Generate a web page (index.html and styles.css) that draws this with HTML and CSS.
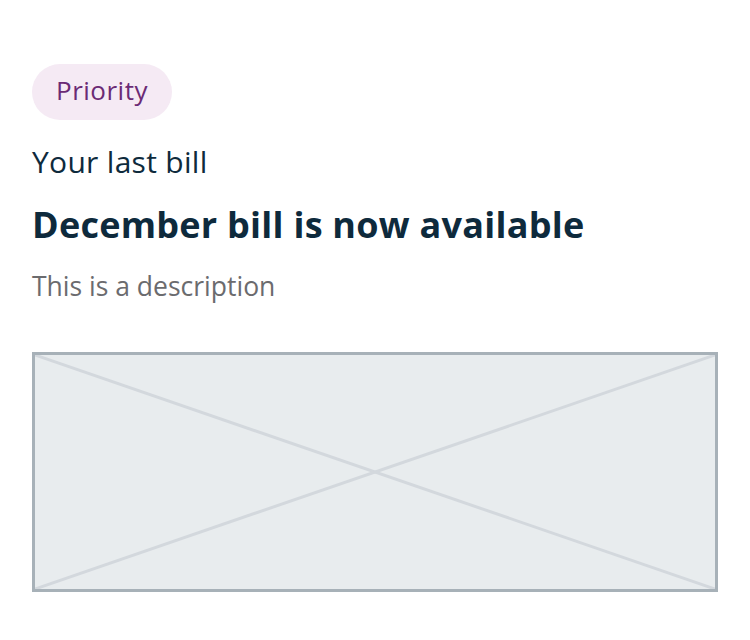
FILE: index.html
```html
<!DOCTYPE html>
<html>
<head>
<meta charset="utf-8">
<link rel="stylesheet" href="styles.css">
</head>
<body>
<div class="card">
  <span class="pill">Priority</span>
  <p class="eyebrow">Your last bill</p>
  <h1 class="title">December bill is now available</h1>
  <p class="desc">This is a description</p>
  <div class="placeholder">
    <svg class="cross" viewBox="0 0 100 100" preserveAspectRatio="none">
      <line x1="0" y1="0" x2="100" y2="100" vector-effect="non-scaling-stroke"/>
      <line x1="100" y1="0" x2="0" y2="100" vector-effect="non-scaling-stroke"/>
    </svg>
  </div>
</div>
</body>
</html>
```

FILE: styles.css
```css
html, body {
  margin: 0;
  padding: 0;
  background: #ffffff;
}
body {
  font-family: "Open Sans", "Noto Sans", sans-serif;
  color: #0e2a3c;
}
.card {
  padding: 64px 32px 0 32px;
  display: flex;
  flex-direction: column;
  align-items: flex-start;
}
.pill {
  display: inline-flex;
  align-items: center;
  height: 56px;
  padding: 0 24px 4px 24px;
  border-radius: 28px;
  background: #f5eaf4;
  color: #6b2a75;
  font-size: 26px;
  font-weight: 500;
  letter-spacing: 0.5px;
  box-sizing: border-box;
}
.eyebrow {
  margin: 22px 0 0 0;
  font-size: 30px;
  letter-spacing: 0.3px;
  line-height: 40px;
}
.title {
  margin: 19px 0 0 0;
  font-size: 36px;
  font-weight: 700;
  letter-spacing: 0.25px;
  line-height: 48px;
}
.desc {
  margin: 19px 0 0 0;
  font-size: 26.5px;
  line-height: 36px;
  color: #6b6b6e;
}
.placeholder {
  margin-top: 48px;
  width: 686px;
  height: 240px;
  box-sizing: border-box;
  border: 3px solid #a7b1b8;
  background: #e8ecee;
}
.cross {
  display: block;
  width: 100%;
  height: 100%;
}
.cross line {
  stroke: #d3d8dd;
  stroke-width: 3;
}
```
